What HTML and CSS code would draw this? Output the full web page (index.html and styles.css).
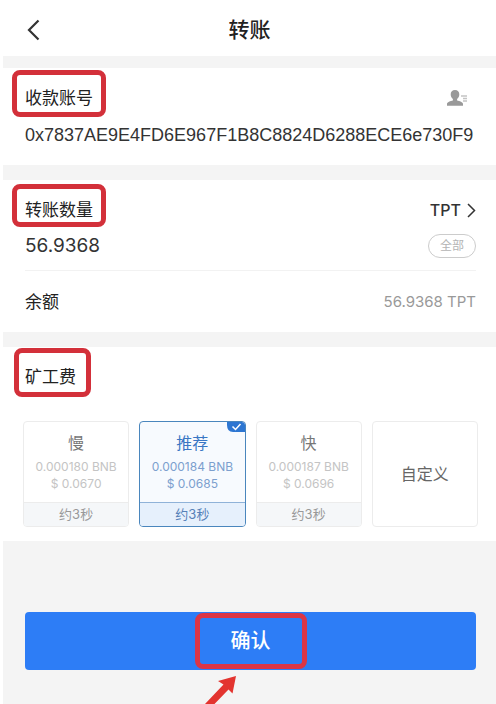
FILE: index.html
```html
<!DOCTYPE html>
<html lang="zh-CN">
<head>
  <meta charset="UTF-8" />
  <meta name="viewport" content="width=device-width, initial-scale=1.0" />
  <title>转账</title>
  <link rel="stylesheet" href="styles.css">
</head>
<body>
  <header class="topbar">
    <button class="back" type="button" aria-label="返回">
      <svg width="14" height="24" viewBox="0 0 14 24"><path d="M12.500 2.500 3 12 12.500 21.500" fill="none" stroke="currentColor" stroke-width="2.200"/></svg>
    </button>
    <h1>转账</h1>
  </header>

  <form class="transfer">
    <section class="panel account">
      <div class="row">
        <label class="title mark" for="address">收款账号</label>
        <button class="contacts" type="button" aria-label="联系人">
          <svg width="22" height="18" viewBox="0 0 22 18">
            <path d="M9 1c-2.700 0-4.300 1.900-4.300 4.300 0 1.900.8 3.600 2.200 4.600v1.500C4.500 12.100 1 12.700 1 15v1.800h16V15c0-2.300-3.500-2.900-5.900-3.600V9.900c1.400-1 2.200-2.700 2.200-4.600C13.300 2.900 11.700 1 9 1z" fill="#999"/>
            <path d="M15 7h6M17 9.500h4M17 12h4" stroke="#c4c4c4" stroke-width="1.300"/>
          </svg>
        </button>
      </div>
      <input class="address" id="address" type="text" value="0x7837AE9E4FD6E967F1B8C8824D6288ECE6e730F9">
    </section>

    <section class="panel amount">
      <div class="row">
        <label class="title mark" for="amount">转账数量</label>
        <button class="token" type="button">TPT
          <svg width="9" height="15" viewBox="0 0 9 15"><path d="M1 1l6.500 6.500L1 14" fill="none" stroke="currentColor" stroke-width="1.500"/></svg>
        </button>
      </div>
      <div class="row value">
        <input class="number" id="amount" type="text" inputmode="decimal" value="56.9368">
        <button class="all" type="button">全部</button>
      </div>
      <div class="row balance">
        <span class="title">余额</span>
        <span class="left">56.9368 TPT</span>
      </div>
    </section>

    <section class="panel fee">
      <h2 class="title mark" id="fee">矿工费</h2>
      <div class="options" role="radiogroup" aria-labelledby="fee">
        <label class="option">
          <input type="radio" name="fee" value="slow">
          <span class="speed">慢</span>
          <span class="cost">0.000180 BNB</span>
          <span class="cost">$ 0.0670</span>
          <span class="time">约3秒</span>
        </label>
        <label class="option selected">
          <input type="radio" name="fee" value="normal" checked>
          <span class="speed">推荐</span>
          <span class="cost">0.000184 BNB</span>
          <span class="cost">$ 0.0685</span>
          <span class="time">约3秒</span>
          <svg class="check" width="18" height="10" viewBox="0 0 18 10"><path d="M0 0h15q3 0 3 3v7H6Q0 10 0 3z" fill="#2d76d2"/><path d="M5.500 4.500 8.500 7.500 13.500 2" fill="none" stroke="#fff" stroke-width="1.500"/></svg>
        </label>
        <label class="option">
          <input type="radio" name="fee" value="fast">
          <span class="speed">快</span>
          <span class="cost">0.000187 BNB</span>
          <span class="cost">$ 0.0696</span>
          <span class="time">约3秒</span>
        </label>
        <label class="option">
          <input type="radio" name="fee" value="custom">
          <span class="custom">自定义</span>
        </label>
      </div>
    </section>

    <div class="actions">
      <button class="confirm" type="submit"><span class="mark">确认</span></button>
      <svg class="arrow" width="32" height="28" viewBox="0 0 32 28"><path d="M31 0 27.500 17.500 23.500 13.500 9.500 28H0L18.500 8.500 13 5z" fill="#e3342f"/></svg>
    </div>
  </form>
</body>
</html>
```

FILE: styles.css
```css
* {
  box-sizing: border-box;
}
html {
  background: #fff;
}
body {
  margin: 0 0 0 3px;
  min-height: 100vh;
  display: flex;
  flex-direction: column;
  background: #f4f4f4;
  color: #333;
  font-family: Inter, "Noto Sans CJK SC", sans-serif;
  font-size: 17px;
  line-height: 24px;
  overflow: hidden;
}
button, input {
  margin: 0;
  padding: 0;
  border: none;
  background: none;
  color: inherit;
  font: inherit;
}
button {
  cursor: pointer;
}
svg {
  display: block;
}
.topbar {
  display: grid;
  grid-template-columns: 24px 1fr 24px;
  align-items: center;
  height: 56px;
  padding: 4px 23px 0;
  background: #fff;
}
.topbar h1 {
  margin: 0;
  text-align: center;
  font-size: 21px;
  font-weight: 500;
  color: #222;
}
.transfer {
  flex: 1;
  display: flex;
  flex-direction: column;
}
.panel {
  background: #fff;
  padding: 18px 20px 0 22px;
}
.row {
  display: flex;
  align-items: center;
  justify-content: space-between;
}
.title {
  margin: 0;
  font-size: 17px;
  font-weight: 400;
  color: #222;
}

/* red frames */
.mark {
  position: relative;
}
.mark::after {
  content: "";
  position: absolute;
  inset: -16px -13px -7px -13px;
  border: 5px solid #d3303a;
  border-radius: 8px;
}

.account {
  margin-top: 12px;
  padding-bottom: 18px;
}
.contacts {
  margin-right: 8px;
}
.address {
  display: block;
  width: 100%;
  height: 24px;
  margin-top: 13px;
  font-family: "Liberation Sans", Arial, sans-serif;
  font-size: 18px;
}
.amount {
  margin-top: 15px;
}
.amount .mark::after {
  inset: -14px -13px -5px -13px;
}
.token {
  display: flex;
  align-items: center;
  gap: 6px;
  font-size: 16px;
  font-weight: 500;
}
.value {
  padding: 12px 0;
  border-bottom: 1px solid #f2f2f2;
}
.number {
  flex: 1;
  min-width: 0;
  height: 24px;
  font-size: 19px;
}
.all {
  width: 48px;
  height: 24px;
  border: 1px solid #ccc;
  border-radius: 12px;
  font-size: 12px;
  line-height: 20px;
  color: #b4b4b4;
}
.balance {
  height: 61px;
}
.left {
  font-size: 15px;
  color: #999;
}
.fee {
  margin-top: 15px;
  padding-bottom: 14px;
}
.fee .title {
  width: fit-content;
}
.fee .mark::after {
  inset: -17px -15px -8px -11px;
}
.options {
  display: grid;
  grid-template-columns: repeat(4, 1fr);
  gap: 10px;
  margin: 32px -2px 0;
}
.option {
  position: relative;
  display: flex;
  flex-direction: column;
  align-items: center;
  height: 106px;
  overflow: hidden;
  border: 1px solid #ececec;
  border-radius: 4px;
  text-align: center;
  cursor: pointer;
}
.option input {
  position: absolute;
  opacity: 0;
}
.speed {
  padding: 9px 0 3px;
  font-size: 16px;
  color: #777;
}
.cost {
  font-size: 12px;
  line-height: 17px;
  white-space: nowrap;
  color: #c4c4c4;
}
.time {
  width: 100%;
  margin-top: auto;
  border-top: 1px solid #ececec;
  background: #f5f7f9;
  font-size: 13px;
  line-height: 23px;
  color: #999;
}
.custom {
  margin: auto;
  font-size: 16px;
  color: #666;
}
.selected {
  border-color: #4a86bd;
  background: #f7fafe;
}
.selected .speed {
  color: #3977c4;
}
.selected .cost {
  color: #7c9fce;
}
.selected .time {
  border-color: #8fb2d8;
  background: #e6f0fc;
  color: #5681b8;
}
.check {
  position: absolute;
  top: 0;
  right: 0;
}
.actions {
  position: relative;
  padding: 71px 20px 34px 22px;
}
.confirm {
  display: block;
  width: 100%;
  height: 58px;
  border-radius: 4px;
  background: #2d7df6;
  color: #fff;
  font-size: 20px;
  font-weight: 500;
}
.confirm .mark::after {
  inset: -16px -36px;
  border-color: #dc3545;
}
.arrow {
  position: absolute;
  bottom: 0;
  left: calc(50% - 45px);
}
```
